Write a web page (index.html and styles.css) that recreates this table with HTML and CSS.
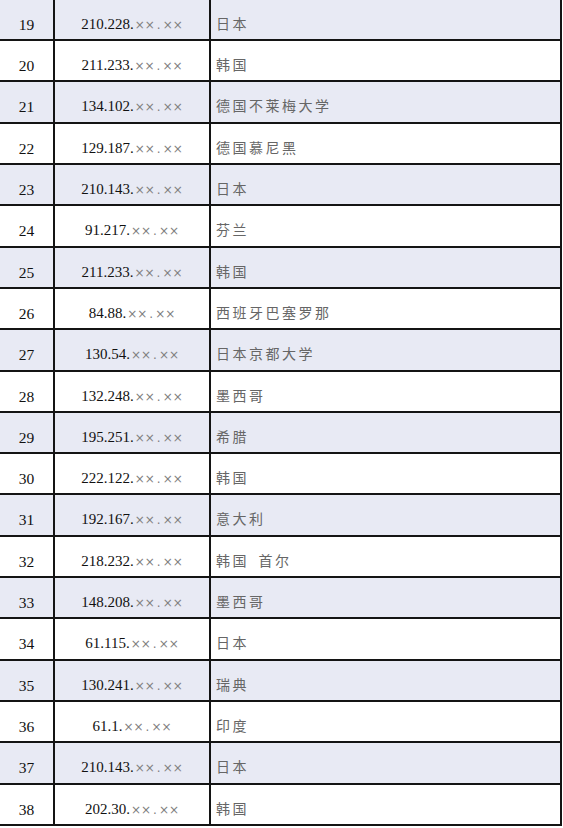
FILE: index.html
```html
<!DOCTYPE html>
<html lang="zh">
<head>
<meta charset="utf-8">
<title>IP 列表</title>
<link rel="stylesheet" href="styles.css">
</head>
<body>
<div class="ip-table">
  <div class="row odd"><div class="cell num">19</div><div class="cell ip">210.228.<span class="mask">××<span class="dot">.</span>××</span></div><div class="cell place">日本</div></div>
  <div class="row"><div class="cell num">20</div><div class="cell ip">211.233.<span class="mask">××<span class="dot">.</span>××</span></div><div class="cell place">韩国</div></div>
  <div class="row odd"><div class="cell num">21</div><div class="cell ip">134.102.<span class="mask">××<span class="dot">.</span>××</span></div><div class="cell place">德国不莱梅大学</div></div>
  <div class="row"><div class="cell num">22</div><div class="cell ip">129.187.<span class="mask">××<span class="dot">.</span>××</span></div><div class="cell place">德国慕尼黑</div></div>
  <div class="row odd"><div class="cell num">23</div><div class="cell ip">210.143.<span class="mask">××<span class="dot">.</span>××</span></div><div class="cell place">日本</div></div>
  <div class="row"><div class="cell num">24</div><div class="cell ip">91.217.<span class="mask">××<span class="dot">.</span>××</span></div><div class="cell place">芬兰</div></div>
  <div class="row odd"><div class="cell num">25</div><div class="cell ip">211.233.<span class="mask">××<span class="dot">.</span>××</span></div><div class="cell place">韩国</div></div>
  <div class="row"><div class="cell num">26</div><div class="cell ip">84.88.<span class="mask">××<span class="dot">.</span>××</span></div><div class="cell place">西班牙巴塞罗那</div></div>
  <div class="row odd"><div class="cell num">27</div><div class="cell ip">130.54.<span class="mask">××<span class="dot">.</span>××</span></div><div class="cell place">日本京都大学</div></div>
  <div class="row"><div class="cell num">28</div><div class="cell ip">132.248.<span class="mask">××<span class="dot">.</span>××</span></div><div class="cell place">墨西哥</div></div>
  <div class="row odd"><div class="cell num">29</div><div class="cell ip">195.251.<span class="mask">××<span class="dot">.</span>××</span></div><div class="cell place">希腊</div></div>
  <div class="row"><div class="cell num">30</div><div class="cell ip">222.122.<span class="mask">××<span class="dot">.</span>××</span></div><div class="cell place">韩国</div></div>
  <div class="row odd"><div class="cell num">31</div><div class="cell ip">192.167.<span class="mask">××<span class="dot">.</span>××</span></div><div class="cell place">意大利</div></div>
  <div class="row"><div class="cell num">32</div><div class="cell ip">218.232.<span class="mask">××<span class="dot">.</span>××</span></div><div class="cell place">韩国&ensp;首尔</div></div>
  <div class="row odd"><div class="cell num">33</div><div class="cell ip">148.208.<span class="mask">××<span class="dot">.</span>××</span></div><div class="cell place">墨西哥</div></div>
  <div class="row"><div class="cell num">34</div><div class="cell ip">61.115.<span class="mask">××<span class="dot">.</span>××</span></div><div class="cell place">日本</div></div>
  <div class="row odd"><div class="cell num">35</div><div class="cell ip">130.241.<span class="mask">××<span class="dot">.</span>××</span></div><div class="cell place">瑞典</div></div>
  <div class="row"><div class="cell num">36</div><div class="cell ip">61.1.<span class="mask">××<span class="dot">.</span>××</span></div><div class="cell place">印度</div></div>
  <div class="row odd"><div class="cell num">37</div><div class="cell ip">210.143.<span class="mask">××<span class="dot">.</span>××</span></div><div class="cell place">日本</div></div>
  <div class="row"><div class="cell num">38</div><div class="cell ip">202.30.<span class="mask">××<span class="dot">.</span>××</span></div><div class="cell place">韩国</div></div>
</div>
</body>
</html>
```

FILE: styles.css
```css
html, body {
  margin: 0;
  padding: 0;
  background: #ffffff;
}

body {
  width: 563px;
  height: 828px;
  overflow: hidden;
}

.ip-table {
  width: 562px;
  margin-top: -0.3px;
  display: flex;
  flex-direction: column;
}

.row {
  display: grid;
  grid-template-columns: 55px 156px 351px;
  height: 41.32px;
  box-sizing: border-box;
  border-bottom: 2px solid #141414;
  background: #ffffff;
}

.row.odd {
  background: #e8eaf4;
}

.cell {
  box-sizing: border-box;
  border-right: 2px solid #141414;
  padding-top: 16px;
  line-height: 17px;
  white-space: nowrap;
}

.num {
  font-family: "Liberation Serif", "Times New Roman", serif;
  font-size: 15.5px;
  color: #111111;
  text-align: center;
}

.ip {
  font-family: "Liberation Serif", "Times New Roman", serif;
  font-size: 15px;
  color: #111111;
  text-align: center;
}

.mask {
  font-family: "DejaVu Sans", sans-serif;
  font-size: 12px;
  color: #808080;
  margin-left: 1px;
}

.dot {
  padding: 0 2px;
}

.place {
  font-family: "Noto Sans CJK SC", sans-serif;
  font-size: 14px;
  letter-spacing: 2.5px;
  color: #666666;
  padding-left: 5px;
  padding-top: 15px;
}
```
